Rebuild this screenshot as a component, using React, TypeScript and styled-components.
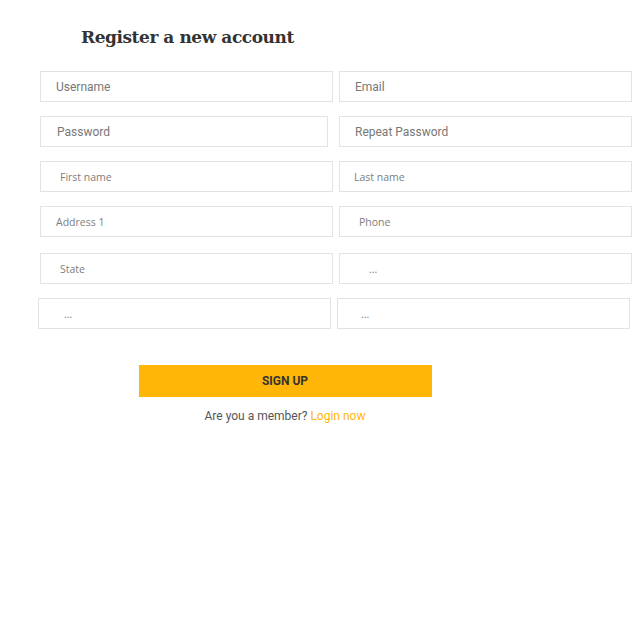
import React from 'react';
import styled, { createGlobalStyle } from 'styled-components';

const GlobalStyle = createGlobalStyle`
  body {
    margin: 0;
    background: #fff;
    font-family: Roboto, 'Liberation Sans', sans-serif;
  }
`;

const Page = styled.div`
  width: 634px;
  height: 640px;
  padding: 24px 0 0 40px;
  box-sizing: border-box;
`;

const Title = styled.h2`
  margin: 0 0 21px 41px;
  font-family: 'DejaVu Serif', serif;
  font-weight: bold;
  font-size: 17px;
  letter-spacing: -0.45px;
  line-height: 26px;
  color: #333;
`;

const Grid = styled.div`
  display: grid;
  grid-template-columns: 293px 293px;
  column-gap: 6px;
  row-gap: 14px;
  width: 592px;
`;

const Field = styled.input<{ $pad: number; $small?: boolean; $dx?: number; $dy?: number; $w?: number }>`
  box-sizing: border-box;
  width: ${({ $w }) => $w ?? 293}px;
  height: 31px;
  margin-left: ${({ $dx }) => $dx ?? 0}px;
  margin-top: ${({ $dy }) => $dy ?? 0}px;
  padding: 0 0 0 ${({ $pad }) => $pad}px;
  border: 1px solid #e3e3e3;
  background: #fff;
  outline: none;
  font-family: ${({ $small }) => ($small ? "'Open Sans', sans-serif" : "Roboto, sans-serif")};
  font-size: ${({ $small }) => ($small ? 10.5 : 12)}px;
  color: #333;

  &::placeholder {
    color: ${({ $small }) => ($small ? '#7d7d7d' : '#777')};
  }
`;

const Footer = styled.div`
  display: flex;
  flex-direction: column;
  align-items: center;
  width: 490px;
  margin-top: 36px;
`;

const SignUp = styled.button`
  width: 293px;
  height: 32px;
  border: none;
  background: #ffb606;
  color: #333;
  font-family: Roboto, sans-serif;
  font-weight: 700;
  font-size: 12px;
  text-transform: uppercase;
  cursor: pointer;
`;

const Member = styled.p`
  margin: 12px 0 0;
  font-family: Roboto, sans-serif;
  font-size: 12px;
  color: #555;
`;

const LoginLink = styled.a`
  color: #ffb606;
  text-decoration: none;
`;

export default function App() {
  return (
    <>
      <GlobalStyle />
      <Page>
        <Title>Register a new account</Title>
        <Grid>
          <Field placeholder="Username" $pad={15} />
          <Field placeholder="Email" $pad={15} />
          <Field placeholder="Password" $pad={16} $w={288} />
          <Field placeholder="Repeat Password" $pad={15} />
          <Field placeholder="First name" $pad={19} $small />
          <Field placeholder="Last name" $pad={14} $small />
          <Field placeholder="Address 1" $pad={15} $small />
          <Field placeholder="Phone" $pad={19} $small />
          <Field placeholder="State" $pad={19} $small $dy={2} />
          <Field placeholder="..." $pad={29} $small $dy={2} />
          <Field placeholder="..." $pad={25} $small $dx={-2} />
          <Field placeholder="..." $pad={23} $small $dx={-2} />
        </Grid>
        <Footer>
          <SignUp>Sign up</SignUp>
          <Member>
            Are you a member? <LoginLink href="#">Login now</LoginLink>
          </Member>
        </Footer>
      </Page>
    </>
  );
}
